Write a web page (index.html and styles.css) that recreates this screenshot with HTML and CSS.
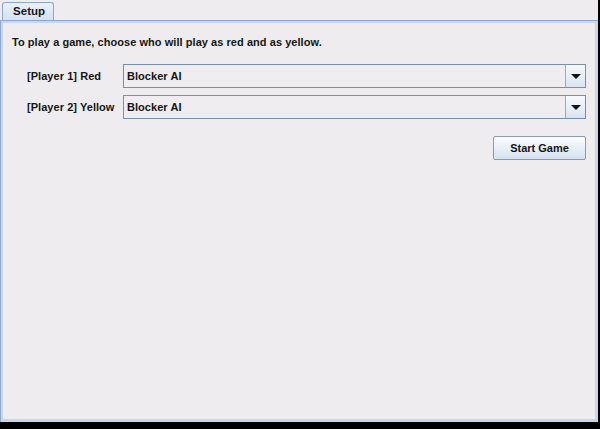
FILE: index.html
```html
<!DOCTYPE html>
<html>
<head>
<meta charset="utf-8">
<link rel="stylesheet" href="styles.css">
</head>
<body>
<div class="frame">
  <div class="tabs">
    <div class="tab">Setup</div>
  </div>
  <div class="panel">
    <p class="intro">To play a game, choose who will play as red and as yellow.</p>
    <div class="row">
      <span class="label">[Player 1] Red</span>
      <div class="combo"><span class="value">Blocker AI</span><span class="arrow"><svg width="10" height="5" viewBox="0 0 10 5"><path d="M0 0H10L5 5Z" fill="#111"/></svg></span></div>
    </div>
    <div class="row">
      <span class="label">[Player 2] Yellow</span>
      <div class="combo"><span class="value">Blocker AI</span><span class="arrow"><svg width="10" height="5" viewBox="0 0 10 5"><path d="M0 0H10L5 5Z" fill="#111"/></svg></span></div>
    </div>
    <div class="actions">
      <button class="btn">Start Game</button>
    </div>
  </div>
</div>
</body>
</html>
```

FILE: styles.css
```css
html, body {
  margin: 0;
  padding: 0;
  background: #000;
  width: 600px;
  height: 429px;
  overflow: hidden;
}
.frame {
  width: 598px;
  height: 422px;
  background: #eeecee;
  display: flex;
  flex-direction: column;
  font-family: "Liberation Sans", Arial, sans-serif;
  font-weight: bold;
  font-size: 11px;
  letter-spacing: 0.05px;
  color: #161616;
}
.tabs {
  height: 20px;
  padding-left: 2px;
  display: flex;
  align-items: flex-end;
  box-sizing: border-box;
  padding-top: 2px;
}
.tab {
  width: 52px;
  height: 18px;
  box-sizing: border-box;
  border: 1px solid #8fa7cc;
  border-bottom: none;
  border-radius: 3px 3px 0 0;
  background: linear-gradient(#e9f0f9, #d4e2f4);
  padding-left: 10px;
  line-height: 17px;
  font-size: 11.5px;
}
.panel {
  flex: 1;
  border-top: 1px solid #8fa7cc;
  border-left: 1px solid #8fa7cc;
  box-shadow: inset 2px 2px 0 #c6d6ee, inset -3px -3px 0 #c6d6ee;
  padding: 15px 12px 0 11px;
  display: flex;
  flex-direction: column;
}
.intro {
  margin: 0 0 15px 0;
  line-height: 13px;
}
.row {
  display: flex;
  align-items: center;
  height: 24px;
  margin-bottom: 7px;
  padding-left: 15px;
}
.label {
  width: 96px;
  white-space: nowrap;
}
.combo {
  flex: 1;
  height: 24px;
  box-sizing: border-box;
  border: 1px solid #7c8fa8;
  background: #efedf0;
  display: flex;
  align-items: stretch;
}
.value {
  flex: 1;
  padding-left: 3px;
  line-height: 22px;
}
.arrow {
  width: 19px;
  border-left: 1px solid #9aaac0;
  background: linear-gradient(#f7f9fc, #d9e4f2);
  display: flex;
  align-items: center;
  justify-content: center;
}
.actions {
  display: flex;
  justify-content: flex-end;
  margin-top: 10px;
}
.btn {
  width: 93px;
  height: 24px;
  border: 1px solid #8d9aab;
  border-radius: 2px;
  background: linear-gradient(#fbfcfe, #d6e2f1);
  font-family: "Liberation Sans", Arial, sans-serif;
  font-weight: bold;
  font-size: 11px;
  color: #161616;
  padding: 0;
}
```
